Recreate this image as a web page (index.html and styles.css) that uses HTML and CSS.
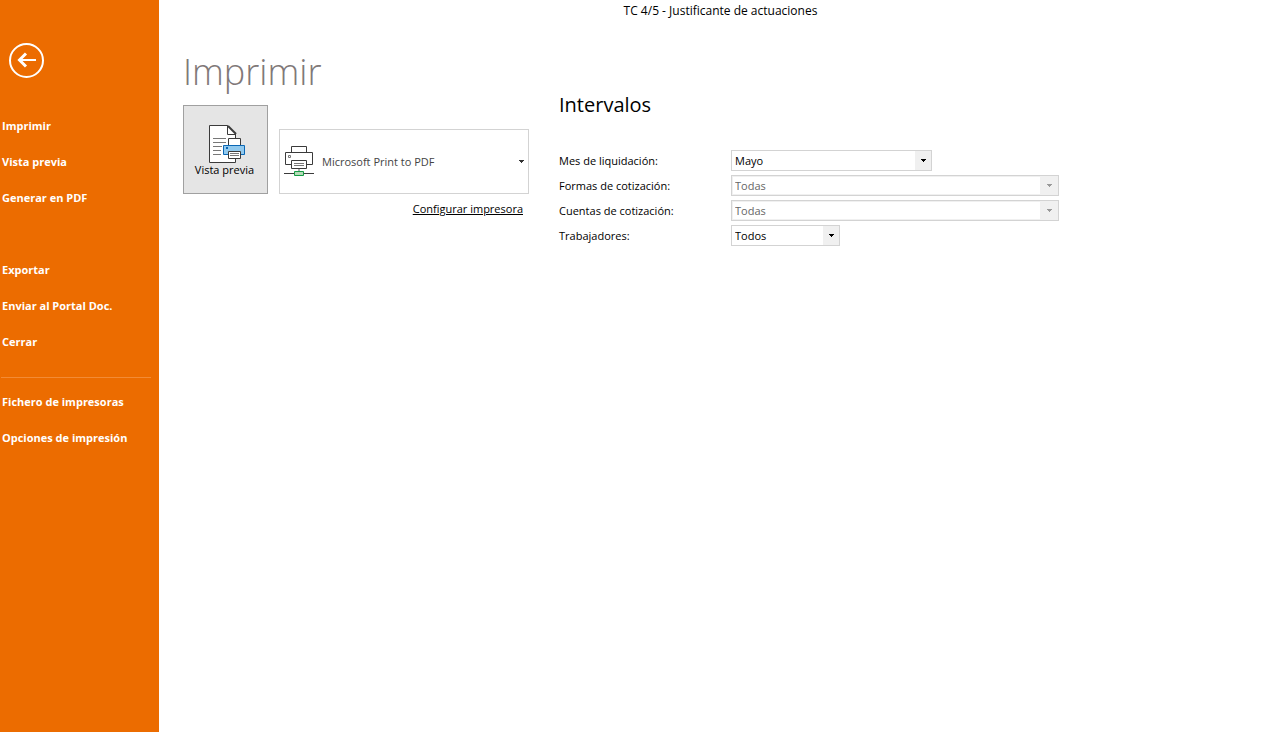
FILE: index.html
```html
<!DOCTYPE html>
<html lang="es">
<head>
<meta charset="utf-8">
<meta name="viewport" content="width=device-width, initial-scale=1">
<title>TC 4/5 - Justificante de actuaciones</title>
<link rel="stylesheet" href="styles.css">
</head>
<body>
<div class="app">
  <aside class="sidebar">
    <button class="back" type="button" aria-label="Volver">
      <svg width="35" height="35" viewBox="0 0 35 35" fill="none" stroke="#fff" aria-hidden="true">
        <circle cx="17.5" cy="17.5" r="16.5" stroke-width="2"/>
        <path d="M10 17H27" stroke-width="2"/>
        <path d="M17 10.500L10.500 17L17 23.500" stroke-width="3"/>
      </svg>
    </button>
    <nav class="menu">
      <button class="menu-item" type="button">Imprimir</button>
      <button class="menu-item" type="button">Vista previa</button>
      <button class="menu-item" type="button">Generar en PDF</button>
    </nav>
    <nav class="menu menu-spaced">
      <button class="menu-item" type="button">Exportar</button>
      <button class="menu-item" type="button">Enviar al Portal Doc.</button>
      <button class="menu-item" type="button">Cerrar</button>
    </nav>
    <hr class="divider">
    <nav class="menu">
      <button class="menu-item" type="button">Fichero de impresoras</button>
      <button class="menu-item" type="button">Opciones de impresión</button>
    </nav>
  </aside>
  <main class="main">
    <header class="titlebar">TC 4/5 - Justificante de actuaciones</header>
    <div class="content">
      <section class="print">
        <h1 class="title">Imprimir</h1>
        <div class="print-row">
          <button class="preview" type="button">
            <svg width="36" height="38" viewBox="1 0 36 38" fill="none" aria-hidden="true">
              <path d="M1.500 .5H19.500L27.500 8.500V37.500H1.500Z" fill="#fff" stroke="#3b3b3b"/>
              <path d="M19.500 .5V9.500H28" stroke="#3b3b3b"/>
              <path d="M20 1L28 9" stroke="#3b3b3b" stroke-width="2"/>
              <path d="M5 13.500H18M5 17.500H18M5 21.500H14M5 25.500H13M5 29.500H13" stroke="#777"/>
              <path d="M20.500 13.500H32.500V21H20.500Z" fill="#fff" stroke="#3b3b3b"/>
              <path d="M15.500 20.500H36.500V29.500H15.500Z" fill="#91c9ee" stroke="#0a67b5"/>
              <path d="M18 22H20V24H18Z" fill="#0a67b5"/>
              <path d="M20.500 26.500H32.500V33.500H20.500Z" fill="#fff" stroke="#3b3b3b"/>
              <path d="M22 28.500H31M22 30.500H31" stroke="#777"/>
            </svg>
            <span>Vista previa</span>
          </button>
          <div class="printer-area">
            <div class="printer">
              <svg class="printer-icon" width="30" height="30" viewBox="0 0 30 30" fill="none" aria-hidden="true">
                <path d="M7.500 6V.5H22.500V6" fill="#fff" stroke="#3b3b3b"/>
                <path d="M1.500 6.500H28.500V18.500H1.500Z" fill="#fff" stroke="#3b3b3b"/>
                <path d="M4.500 9.500H6.500V11.500H4.500Z" stroke="#777"/>
                <path d="M15 22V25" stroke="#aaa" stroke-width="2"/>
                <path d="M7.500 14.500H22.500V22.500H7.500Z" fill="#fff" stroke="#3b3b3b"/>
                <path d="M10 17.500H20M10 19.500H20" stroke="#777"/>
                <path d="M0 27.500H30" stroke="#3b3b3b"/>
                <path d="M10.500 25.500H19.500V29.500H10.500Z" fill="#b5dcb8" stroke="#169b45"/>
              </svg>
              <select class="printer-select" aria-label="Impresora"><option>Microsoft Print to PDF</option></select>
              <svg class="printer-arrow" width="5" height="3" viewBox="0 0 5 3" fill="#333" aria-hidden="true"><path d="M0 0H5V1H4V2H3V3H2V2H1V1H0Z"/></svg>
            </div>
            <a class="config" href="#">Configurar impresora</a>
          </div>
        </div>
      </section>
      <section class="ranges">
        <h2 class="subtitle">Intervalos</h2>
        <form class="form">
          <label for="mes">Mes de liquidación:</label>
          <div class="combo combo-medium">
            <select id="mes"><option>Mayo</option></select>
            <span class="arrow"><svg width="5" height="3" viewBox="0 0 5 3" aria-hidden="true"><path d="M0 0H5V1H4V2H3V3H2V2H1V1H0Z"/></svg></span>
          </div>
          <label for="formas">Formas de cotización:</label>
          <div class="combo combo-disabled">
            <select id="formas" disabled><option>Todas</option></select>
            <span class="arrow"><svg width="5" height="3" viewBox="0 0 5 3" aria-hidden="true"><path d="M0 0H5V1H4V2H3V3H2V2H1V1H0Z"/></svg></span>
          </div>
          <label for="cuentas">Cuentas de cotización:</label>
          <div class="combo combo-disabled">
            <select id="cuentas" disabled><option>Todas</option></select>
            <span class="arrow"><svg width="5" height="3" viewBox="0 0 5 3" aria-hidden="true"><path d="M0 0H5V1H4V2H3V3H2V2H1V1H0Z"/></svg></span>
          </div>
          <label for="trabajadores">Trabajadores:</label>
          <div class="combo combo-small">
            <select id="trabajadores"><option>Todos</option></select>
            <span class="arrow"><svg width="5" height="3" viewBox="0 0 5 3" aria-hidden="true"><path d="M0 0H5V1H4V2H3V3H2V2H1V1H0Z"/></svg></span>
          </div>
        </form>
      </section>
    </div>
  </main>
</div>
</body>
</html>
```
FILE: styles.css
```css
* {
  box-sizing: border-box;
}

body {
  margin: 0;
  background: #fff;
  color: #000;
  font: 12px/16px "Open Sans", "Noto Sans", sans-serif;
}

button,
select {
  font: inherit;
  color: inherit;
  border: 0;
  border-radius: 0;
  margin: 0;
  padding: 0;
  background: none;
  appearance: none;
}

.app {
  display: flex;
  min-height: 100vh;
}

.sidebar {
  flex: 0 0 159px;
  padding-top: 43px;
  background: #ec6c00;
  color: #fff;
}

.back {
  display: block;
  margin: 0 0 30px 9px;
}

.back svg {
  display: block;
}

.menu {
  display: flex;
  flex-direction: column;
}

.menu-spaced {
  margin-top: 36px;
}

.menu-item {
  height: 36px;
  padding-left: 2px;
  text-align: left;
  font-size: 11px;
  font-weight: 700;
}

.divider {
  height: 1px;
  margin: 17px 8px 6px 1px;
  border: 0;
  background: #f38b35;
}

.main {
  flex: 1;
  min-width: 0;
}

.titlebar {
  padding: 3px 6px 3px 0;
  text-align: center;
}

.content {
  display: grid;
  grid-template-columns: 346px minmax(0, 1fr);
  column-gap: 30px;
  padding: 24px;
}

.title {
  margin: 0 0 7px;
  color: #807878;
  font-size: 36px;
  font-weight: 300;
  line-height: 52px;
}

.print-row {
  display: flex;
  gap: 11px;
}

.preview {
  display: flex;
  flex-direction: column;
  align-items: center;
  flex: 0 0 85px;
  height: 89px;
  padding: 19px 2px 0 0;
  border: 1px solid #a0a0a0;
  background: #e5e5e5;
  font-size: 11px;
  line-height: 14px;
}

.preview svg {
  margin-left: 4px;
}

.printer-area {
  flex: 1;
  display: flex;
  flex-direction: column;
  align-items: flex-end;
  padding-top: 24px;
}

.printer {
  position: relative;
  width: 100%;
}

.printer-select {
  display: block;
  width: 100%;
  height: 65px;
  padding: 0 16px 0 42px;
  border: 1px solid #d3d3d3;
  color: #444;
  font-size: 11px;
}

.printer-icon {
  position: absolute;
  left: 5px;
  top: 17px;
}

.printer-arrow {
  position: absolute;
  right: 5px;
  top: 31px;
}

.config {
  margin: 7px 6px 0 0;
  color: #000;
  font-size: 11px;
}

.subtitle {
  margin: 45px 0 31px;
  font-size: 20px;
  font-weight: 400;
  line-height: 28px;
}

.form {
  display: grid;
  grid-template-columns: 172px minmax(0, 328px);
  row-gap: 4px;
  align-items: center;
  font-size: 11px;
}

.combo {
  display: flex;
  height: 21px;
  border: 1px solid #d3d3d3;
}

.combo-medium {
  width: 201px;
}

.combo-small {
  width: 109px;
}

.combo-disabled {
  color: #666;
  box-shadow: inset 0 0 0 1px #f0f0f0;
}

.combo select {
  flex: 1;
  min-width: 0;
  padding-left: 3px;
  opacity: 1;
}

.arrow {
  display: grid;
  place-items: center;
  width: 16px;
  background: #f0f0f0;
  pointer-events: none;
}

.combo-disabled .arrow {
  width: 18px;
}

.arrow svg {
  fill: #000;
}

.combo-disabled .arrow svg {
  fill: #999;
}
```
